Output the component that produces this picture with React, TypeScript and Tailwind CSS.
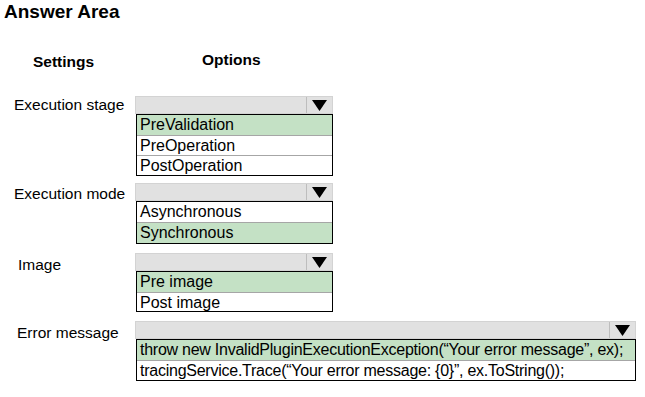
import React from 'react';

type Opt = { text: string; on?: boolean; h: number };

type Row = {
  label: string;
  labelPl: string;
  labelPt: string;
  mt: string;
  wide?: boolean;
  options: Opt[];
};

// heights include the 1px separator line on every row after the first
const ROWS: Row[] = [
  {
    label: 'Execution stage',
    labelPl: 'pl-[14px]',
    labelPt: 'pt-0',
    mt: 'mt-[26px]',
    options: [
      { text: 'PreValidation', on: true, h: 20 },
      { text: 'PreOperation', h: 20 },
      { text: 'PostOperation', h: 20 }
    ]
  },
  {
    label: 'Execution mode',
    labelPl: 'pl-[14px]',
    labelPt: 'pt-[2px]',
    mt: 'mt-[7px]',
    options: [
      { text: 'Asynchronous', h: 20 },
      { text: 'Synchronous', on: true, h: 21 }
    ]
  },
  {
    label: 'Image',
    labelPl: 'pl-[18px]',
    labelPt: 'pt-[3px]',
    mt: 'mt-[9px]',
    options: [
      { text: 'Pre image', on: true, h: 20 },
      { text: 'Post image', h: 19 }
    ]
  },
  {
    label: 'Error message',
    labelPl: 'pl-[17px]',
    labelPt: 'pt-[3px]',
    mt: 'mt-[9px]',
    wide: true,
    options: [
      { text: 'throw new InvalidPluginExecutionException(\u201cYour error message\u201d, ex);', on: true, h: 20 },
      { text: 'tracingService.Trace(\u201cYour error message: {0}\u201d, ex.ToString());', h: 20 }
    ]
  }
];

function Arrow() {
  return (
    <svg width="15" height="11" viewBox="0 0 15 11" className="block">
      <polygon points="0,0 15,0 7.5,11" fill="#000" />
    </svg>
  );
}

function Dropdown({ row }: { row: Row }) {
  return (
    <div className={row.wide ? 'w-[501px]' : 'w-[198px]'}>
      <div className="flex h-[18px] border border-[#d3d3d3] bg-[#e1e1e1]">
        <div className="flex-1" />
        <div className="flex w-[26px] items-center justify-center border-l border-[#bdbdbd]">
          <Arrow />
        </div>
      </div>
      <div className="ml-[1px] border border-black bg-white">
        {row.options.map((o, i) => (
          <div
            key={o.text}
            style={{ height: o.h }}
            className={
              'whitespace-nowrap pl-[3px] text-[16px] leading-[19px] text-black ' +
              (i > 0 ? 'border-t border-[#a6a6a6] ' : '') +
              (o.on ? 'bg-[#c4e1c5] ' : '') +
              (row.wide ? 'tracking-[-0.25px]' : '')
            }
          >
            {o.text}
          </div>
        ))}
      </div>
    </div>
  );
}

export default function App() {
  return (
    <div className="h-[397px] w-[645px] bg-white font-['Liberation_Sans',Arial,sans-serif] text-black">
      <div className="pl-[4px] text-[19px] font-bold leading-[24px]">Answer Area</div>

      <div className="mt-[26px] flex h-[20px]">
        <div className="w-[202px] pl-[33px] pt-[2px] text-[15.5px] font-bold leading-[20px]">Settings</div>
        <div className="text-[15.5px] font-bold leading-[20px]">Options</div>
      </div>

      {ROWS.map((r) => (
        <div key={r.label} className={'flex ' + r.mt}>
          <div className={'w-[135px] text-[15.5px] leading-[18px] ' + r.labelPl + ' ' + r.labelPt}>{r.label}</div>
          <Dropdown row={r} />
        </div>
      ))}
    </div>
  );
}
